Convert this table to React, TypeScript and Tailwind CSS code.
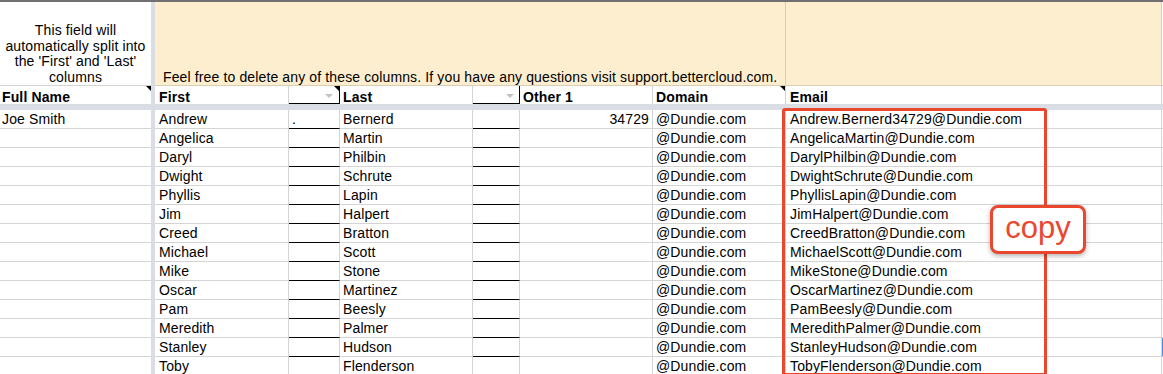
import React from 'react';

type Person = { first: string; last: string };

const people: Person[] = [
  { first: 'Andrew', last: 'Bernerd' },
  { first: 'Angelica', last: 'Martin' },
  { first: 'Daryl', last: 'Philbin' },
  { first: 'Dwight', last: 'Schrute' },
  { first: 'Phyllis', last: 'Lapin' },
  { first: 'Jim', last: 'Halpert' },
  { first: 'Creed', last: 'Bratton' },
  { first: 'Michael', last: 'Scott' },
  { first: 'Mike', last: 'Stone' },
  { first: 'Oscar', last: 'Martinez' },
  { first: 'Pam', last: 'Beesly' },
  { first: 'Meredith', last: 'Palmer' },
  { first: 'Stanley', last: 'Hudson' },
  { first: 'Toby', last: 'Flenderson' },
];

const cell = 'relative h-[19px] border-r border-b border-r-[#d4d4d4] text-[14px] leading-[18px] whitespace-nowrap overflow-hidden';
const grid = 'border-b-[#d4d4d4]';
const dark = 'border-b-black';

// little black comment marker in a cell corner
const Corner = () => (
  <div className="absolute right-0 top-0 w-0 h-0 border-l-[5px] border-l-transparent border-t-[5px] border-t-black" />
);

// greyed filter arrow
const Arrow = ({ right }: { right: string }) => (
  <div className={`absolute top-[8px] ${right} w-0 h-0 border-x-[4px] border-x-transparent border-t-[4px] border-t-[#c4c4c4]`} />
);

const Divider = ({ h }: { h: string }) => <div className={`${h} bg-[#dadde3]`} />;

export default function App() {
  return (
    <div className="relative w-[1163px] h-[374px] overflow-hidden bg-white border-t-2 border-[#707070] font-['Liberation_Sans',Arial,sans-serif] tracking-[0.13px] text-black">
      <div className="grid grid-cols-[151px_4px_134px_51px_133px_47px_133px_133px_376px_1fr]">
        {/* note row */}
        <div className="h-[84px] border-b border-[#d4d4d4] flex items-end justify-center px-1 text-center text-[14px] leading-[15.5px]">
          This field will automatically split into the 'First' and 'Last' columns
        </div>
        <Divider h="h-[84px]" />
        <div className="col-span-6 h-[84px] bg-[#fdeed0] border-b border-r border-[#d9cdb2] flex items-end pl-[8px] text-[14px] leading-[16px] whitespace-nowrap">
          Feel free to delete any of these columns. If you have any questions visit support.bettercloud.com.
        </div>
        <div className="h-[84px] bg-[#fdeed0] border-b border-r border-[#d9cdb2]" />
        <div className="h-[84px] border-b border-[#d4d4d4]" />

        {/* column headers */}
        <div className="relative h-[18px] pl-[2px] pt-[3px] text-[14px] leading-[16px] font-bold">
          Full Name
          <Corner />
        </div>
        <Divider h="h-[18px]" />
        <div className="h-[18px] border-r border-[#d4d4d4] pl-[4px] pt-[3px] text-[14px] leading-[16px] font-bold">First</div>
        <div className="relative h-[18px] border-r border-b border-black border-l-0">
          <Arrow right="right-[6px]" />
          <Corner />
        </div>
        <div className="h-[18px] border-r border-[#d4d4d4] pl-[3px] pt-[3px] text-[14px] leading-[16px] font-bold">Last</div>
        <div className="relative h-[18px] border-r border-b border-black">
          <Arrow right="right-[5px]" />
        </div>
        <div className="h-[18px] border-r border-[#d4d4d4] pl-[3px] pt-[3px] text-[14px] leading-[16px] font-bold">Other 1</div>
        <div className="relative h-[18px] border-r border-[#d4d4d4] pl-[3px] pt-[3px] text-[14px] leading-[16px] font-bold">
          Domain
          <Corner />
        </div>
        <div className="h-[18px] border-r border-[#d4d4d4] pl-[4px] pt-[3px] text-[14px] leading-[16px] font-bold">Email</div>
        <div className="h-[18px]" />

        {/* frozen header separator */}
        <div className="col-span-full h-[6px] bg-[#dadde3]" />

        {people.map((p, i) => (
          <React.Fragment key={p.first}>
            <div className={`${cell} ${grid} border-r-0 pl-[2px]`}>{i === 0 ? 'Joe Smith' : ''}</div>
            <Divider h="h-[19px]" />
            <div className={`${cell} ${grid} pl-[4px]`}>{p.first}</div>
            <div className={`${cell} ${dark} pl-[3px]`}>{i === 0 ? '.' : ''}</div>
            <div className={`${cell} ${grid} pl-[3px] leading-[16px]`}>{p.last}</div>
            <div className={`${cell} ${dark}`} />
            <div className={`${cell} ${grid} pr-[3px] text-right`}>{i === 0 ? '34729' : ''}</div>
            <div className={`${cell} ${grid} pl-[3px]`}>@Dundie.com</div>
            <div className={`${cell} ${grid} pl-[4px]`}>
              {i === 0 ? 'Andrew.Bernerd34729@Dundie.com' : `${p.first}${p.last}@Dundie.com`}
            </div>
            <div className={`h-[19px] border-b border-[#d4d4d4] ${i === 12 ? 'border-l-2 border-l-[#4a8fe0] -ml-px' : ''}`} />
          </React.Fragment>
        ))}
      </div>

      {/* selection outline round the email column */}
      <div className="absolute left-[782px] top-[106px] w-[265px] h-[268px] border-[3px] border-[#e9482f] rounded-[3px]" />

      {/* callout */}
      <div className="absolute left-[990px] top-[203px] w-[96px] h-[49px] bg-white border-[3px] border-[#e9482f] rounded-[8px] shadow-[0_2px_5px_rgba(0,0,0,0.3)] flex items-center justify-center pb-[5px] text-[31px] leading-none tracking-normal text-[#e9482f]">
        copy
      </div>
    </div>
  );
}
